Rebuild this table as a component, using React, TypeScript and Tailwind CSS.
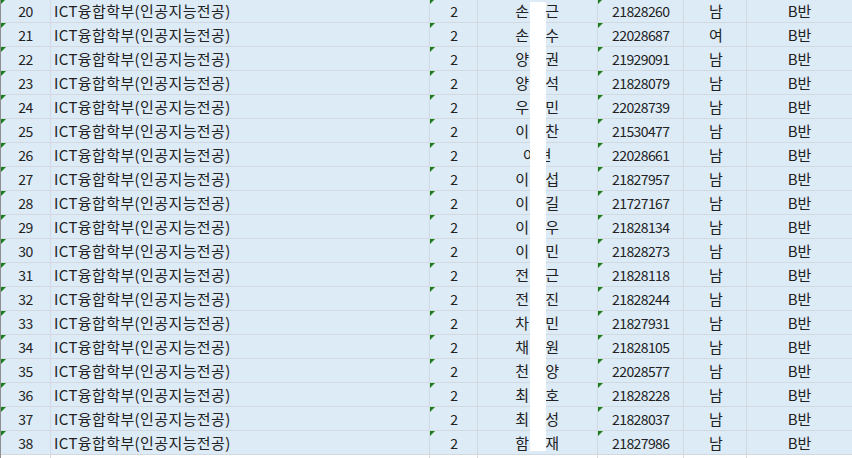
import React from "react";

type Row = { n: number; a: string; b: string; sid: string; g: string };

const rows: Row[] = [
  { n: 20, a: "손", b: "근", sid: "21828260", g: "남" },
  { n: 21, a: "손", b: "수", sid: "22028687", g: "여" },
  { n: 22, a: "양", b: "권", sid: "21929091", g: "남" },
  { n: 23, a: "양", b: "석", sid: "21828079", g: "남" },
  { n: 24, a: "우", b: "민", sid: "22028739", g: "남" },
  { n: 25, a: "이", b: "찬", sid: "21530477", g: "남" },
  { n: 26, a: "이", b: "현", sid: "22028661", g: "남" },
  { n: 27, a: "이", b: "섭", sid: "21827957", g: "남" },
  { n: 28, a: "이", b: "길", sid: "21727167", g: "남" },
  { n: 29, a: "이", b: "우", sid: "21828134", g: "남" },
  { n: 30, a: "이", b: "민", sid: "21828273", g: "남" },
  { n: 31, a: "전", b: "근", sid: "21828118", g: "남" },
  { n: 32, a: "전", b: "진", sid: "21828244", g: "남" },
  { n: 33, a: "차", b: "민", sid: "21827931", g: "남" },
  { n: 34, a: "채", b: "원", sid: "21828105", g: "남" },
  { n: 35, a: "천", b: "양", sid: "22028577", g: "남" },
  { n: 36, a: "최", b: "호", sid: "21828228", g: "남" },
  { n: 37, a: "최", b: "성", sid: "21828037", g: "남" },
  { n: 38, a: "함", b: "재", sid: "21827986", g: "남" },
];

function Tri() {
  return (
    <span className="absolute left-0 top-0 w-0 h-0 border-t-[5px] border-r-[5px] border-t-[#1c7d1c] border-r-transparent" />
  );
}

function DataRow({ r }: { r: Row }) {
  const two = r.n === 26;
  return (
    <div className="flex h-[24px] border-b border-[#d3d9e0] bg-[#ddebf7]">
      <div className="relative flex w-[50px] items-center justify-center border-r border-[#d3d9e0] tracking-[-0.6px]">
        <Tri />
        {r.n}
      </div>
      <div className="flex w-[380px] items-center border-r border-[#d3d9e0] pl-[3px] text-[15px] tracking-[0.4px]">
        ICT융합학부(인공지능전공)
      </div>
      <div className="relative flex w-[48px] items-center justify-center border-r border-[#d3d9e0]">
        <Tri />2
      </div>
      <div className="flex w-[120px] items-center justify-center border-r border-[#d3d9e0] text-[15px] tracking-normal">
        {two ? (
          <>
            <span className="inline-block w-[15px]">{r.a}</span>
            <span className="inline-block w-[15px]">{r.b}</span>
          </>
        ) : (
          <>
            <span className="inline-block w-[15px]">{r.a}</span>
            <span className="inline-block w-[15px]" />
            <span className="inline-block w-[15px]">{r.b}</span>
          </>
        )}
      </div>
      <div className="relative flex w-[86px] items-center justify-center border-r border-[#d3d9e0] tracking-[-0.6px]">
        <Tri />
        {r.sid}
      </div>
      <div className="flex w-[63px] items-center justify-center border-r border-[#d3d9e0] pl-[1px] text-[15px]">
        {r.g}
      </div>
      <div className="flex w-[105px] items-center justify-center text-[15px] tracking-normal">B반</div>
    </div>
  );
}

export default function App() {
  return (
    <div className="relative h-[458px] w-[852px] overflow-hidden bg-white font-['Noto_Sans_CJK_KR',sans-serif] text-[14px] leading-none tracking-[-0.5px] text-[#222222]">
      <div className="-mt-[1px] border-l border-[#8f8f8f]">
        {rows.map((r) => (
          <DataRow key={r.n} r={r} />
        ))}
        <div className="flex h-[24px]">
          <div className="w-[50px] border-r border-[#d9d9d9]" />
          <div className="w-[380px] border-r border-[#d9d9d9]" />
          <div className="w-[48px] border-r border-[#d9d9d9]" />
          <div className="w-[120px] border-r border-[#d9d9d9]" />
          <div className="w-[86px] border-r border-[#d9d9d9]" />
          <div className="w-[63px] border-r border-[#d9d9d9]" />
          <div className="w-[105px]" />
        </div>
      </div>
      <div className="absolute left-[530px] top-[2px] h-[449px] w-[16px] bg-white" />
    </div>
  );
}
